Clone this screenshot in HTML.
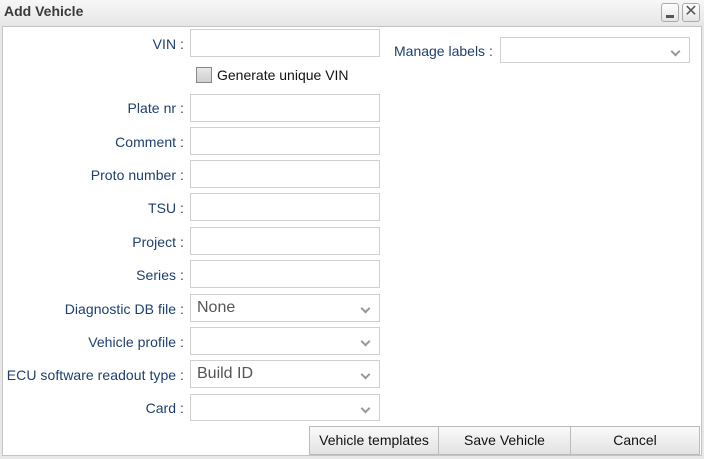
<!DOCTYPE html>
<html><head><style>
*{box-sizing:border-box;margin:0;padding:0}
body{width:704px;height:459px;background:#e8e8e8;font-family:"Liberation Sans",Arial,sans-serif;font-size:14px;position:relative;overflow:hidden}
.title{position:absolute;left:0;top:0;width:704px;height:26px;background:linear-gradient(#f7f7f7,#e6e6e6);}
.title b{position:absolute;left:4px;top:3px;font-size:14px;color:#3a3a3a}
.tb{position:absolute;top:3px;width:18px;height:19px;border:1px solid #aaa;border-radius:3px;background:linear-gradient(#fff,#e4e4e4)}
.panel{position:absolute;left:2px;top:26px;width:700px;height:430px;background:#fff;border:1px solid #c4c4c4}
.lab{position:absolute;right:520px;color:#1d3f6e;text-align:right;white-space:nowrap;letter-spacing:0.05px}
.in{position:absolute;left:190px;width:190px;height:28px;border:1px solid #d0d0d0;background:#fff}
.sel{font-size:16px;color:#555;padding:4px 6px}
.sel:after{content:"";position:absolute;right:10px;top:10px;width:5px;height:5px;border-right:2px solid #999;border-bottom:2px solid #999;transform:rotate(45deg)}
.btn{position:absolute;top:426px;height:29px;border:1px solid #bbb;background:linear-gradient(#fafafa,#e2e2e2);color:#111;text-align:center;line-height:27px;font-size:14px}
</style></head><body>
<div class="title"><b>Add Vehicle</b>
<div class="tb" style="left:661px"><div style="position:absolute;left:4px;top:11px;width:8px;height:3px;background:#555"></div></div>
<div class="tb" style="left:682px;font-size:16px;line-height:16px;text-align:center;color:#555">✕</div></div>
<div class="panel"></div>
<div class="lab" style="top:36px">VIN :</div><div class="in" style="top:29px"></div>
<div style="position:absolute;left:196px;top:67px;width:16px;height:16px;border:1px solid #888;background:linear-gradient(#e8e8e8,#cfcfcf)"></div>
<div style="position:absolute;left:217px;top:67px;color:#111">Generate unique VIN</div>
<div class="lab" style="top:100px">Plate nr :</div><div class="in" style="top:94px"></div>
<div class="lab" style="top:134px">Comment :</div><div class="in" style="top:127px"></div>
<div class="lab" style="top:167px">Proto number :</div><div class="in" style="top:160px"></div>
<div class="lab" style="top:200px">TSU :</div><div class="in" style="top:193px"></div>
<div class="lab" style="top:234px">Project :</div><div class="in" style="top:227px"></div>
<div class="lab" style="top:267px">Series :</div><div class="in" style="top:260px"></div>
<div class="lab" style="top:301px">Diagnostic DB file :</div><div class="in sel" style="top:294px">None</div>
<div class="lab" style="top:334px">Vehicle profile :</div><div class="in sel" style="top:327px"></div>
<div class="lab" style="top:367px">ECU software readout type :</div><div class="in sel" style="top:360px">Build ID</div>
<div class="lab" style="top:400px">Card :</div><div class="in sel" style="top:394px;height:27px"></div>
<div style="position:absolute;left:394px;top:43px;color:#1d3f6e">Manage labels :</div>
<div class="in sel" style="left:500px;top:37px;width:190px;height:26px"></div>
<div class="btn" style="left:309px;width:130px">Vehicle templates</div>
<div class="btn" style="left:438px;width:133px">Save Vehicle</div>
<div class="btn" style="left:570px;width:130px">Cancel</div>
</body></html>
